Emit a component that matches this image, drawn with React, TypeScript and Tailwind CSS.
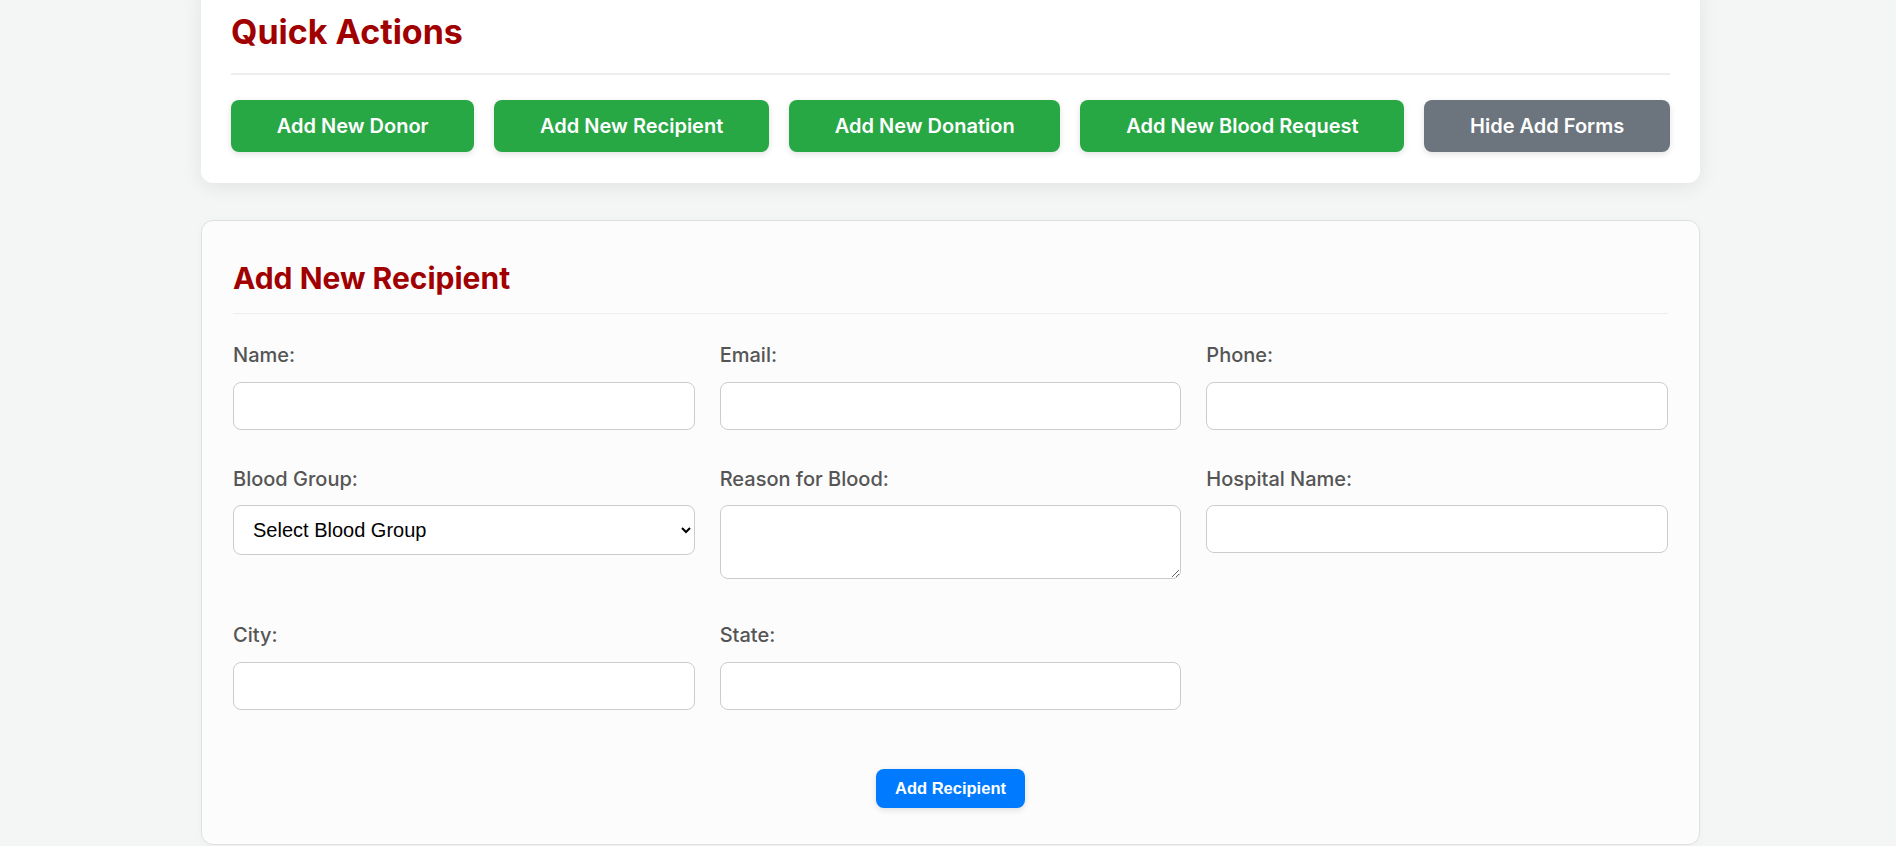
import React from "react";

const ACTIONS = [
  { label: "Add New Donor", tone: "green" },
  { label: "Add New Recipient", tone: "green" },
  { label: "Add New Donation", tone: "green" },
  { label: "Add New Blood Request", tone: "green" },
  { label: "Hide Add Forms", tone: "gray" },
];

const inputClass =
  "block w-full h-[48px] rounded-[8px] border border-[#cccccc] bg-white px-[12px] text-[18px] outline-none";

function Field({ label, children }: { label: string; children: React.ReactNode }) {
  return (
    <div>
      <label className="mb-[12px] block text-[20px] leading-[28.8px] font-medium text-[#555555]">{label}</label>
      {children}
    </div>
  );
}

export default function App() {
  return (
    <div className="min-h-screen overflow-hidden bg-[#f4f6f5] pl-[201px] pr-[196px] font-['Inter',sans-serif]">
      <div className="-mt-[18px] rounded-[12px] bg-white px-[30px] pt-[30px] pb-[31px] shadow-[0_4px_20px_rgba(0,0,0,0.08)]">
        <h2 className="mb-[25px] border-b-2 border-[#eeeeee] pb-[20px] text-[34px] leading-[1.2] font-bold text-[#a00000]">
          Quick Actions
        </h2>
        <div className="flex gap-[20px]">
          {ACTIONS.map((a) => (
            <button
              key={a.label}
              className={`h-[52px] flex-auto rounded-[8px] px-[24px] text-[20px] font-semibold text-white shadow-[0_2px_6px_rgba(0,0,0,0.12)] ${
                a.tone === "green" ? "bg-[#28a745]" : "bg-[#6c757d]"
              }`}
            >
              {a.label}
            </button>
          ))}
        </div>
      </div>

      <div className="mt-[37px] rounded-[12px] border border-[#e0e0e0] bg-[#fcfcfc] px-[31px] pt-[39px] pb-[36px] shadow-[0_2px_10px_rgba(0,0,0,0.03)]">
        <h3 className="mb-[27px] border-b border-[#eeeeee] pb-[17px] text-[30px] leading-[1.2] font-bold text-[#a00000]">
          Add New Recipient
        </h3>

        <div className="grid grid-cols-3 gap-x-[25px] gap-y-[35px]">
          <Field label="Name:">
            <input type="text" className={inputClass} />
          </Field>
          <Field label="Email:">
            <input type="email" className={inputClass} />
          </Field>
          <Field label="Phone:">
            <input type="tel" className={inputClass} />
          </Field>

          <Field label="Blood Group:">
            <select className="block h-[50px] w-full rounded-[8px] border border-[#cccccc] bg-white px-[15px] font-['Liberation_Sans',Arial,sans-serif] text-[20px] text-black outline-none">
              <option>Select Blood Group</option>
              <option>A+</option>
              <option>A-</option>
              <option>B+</option>
              <option>B-</option>
              <option>AB+</option>
              <option>AB-</option>
              <option>O+</option>
              <option>O-</option>
            </select>
          </Field>
          <Field label="Reason for Blood:">
            <textarea className="mb-[7px] block h-[74px] w-full rounded-[8px] border border-[#cccccc] bg-white px-[12px] py-[12px] text-[18px] outline-none" />
          </Field>
          <Field label="Hospital Name:">
            <input type="text" className={inputClass} />
          </Field>

          <Field label="City:">
            <input type="text" className={inputClass} />
          </Field>
          <Field label="State:">
            <input type="text" className={inputClass} />
          </Field>
        </div>

        <div className="mt-[59px] flex justify-center">
          <button className="h-[39px] rounded-[8px] bg-[#007bff] px-[19px] font-['Liberation_Sans',Arial,sans-serif] text-[16.5px] font-bold text-white shadow-[0_2px_6px_rgba(0,0,0,0.12)]">
            Add Recipient
          </button>
        </div>
      </div>
    </div>
  );
}
